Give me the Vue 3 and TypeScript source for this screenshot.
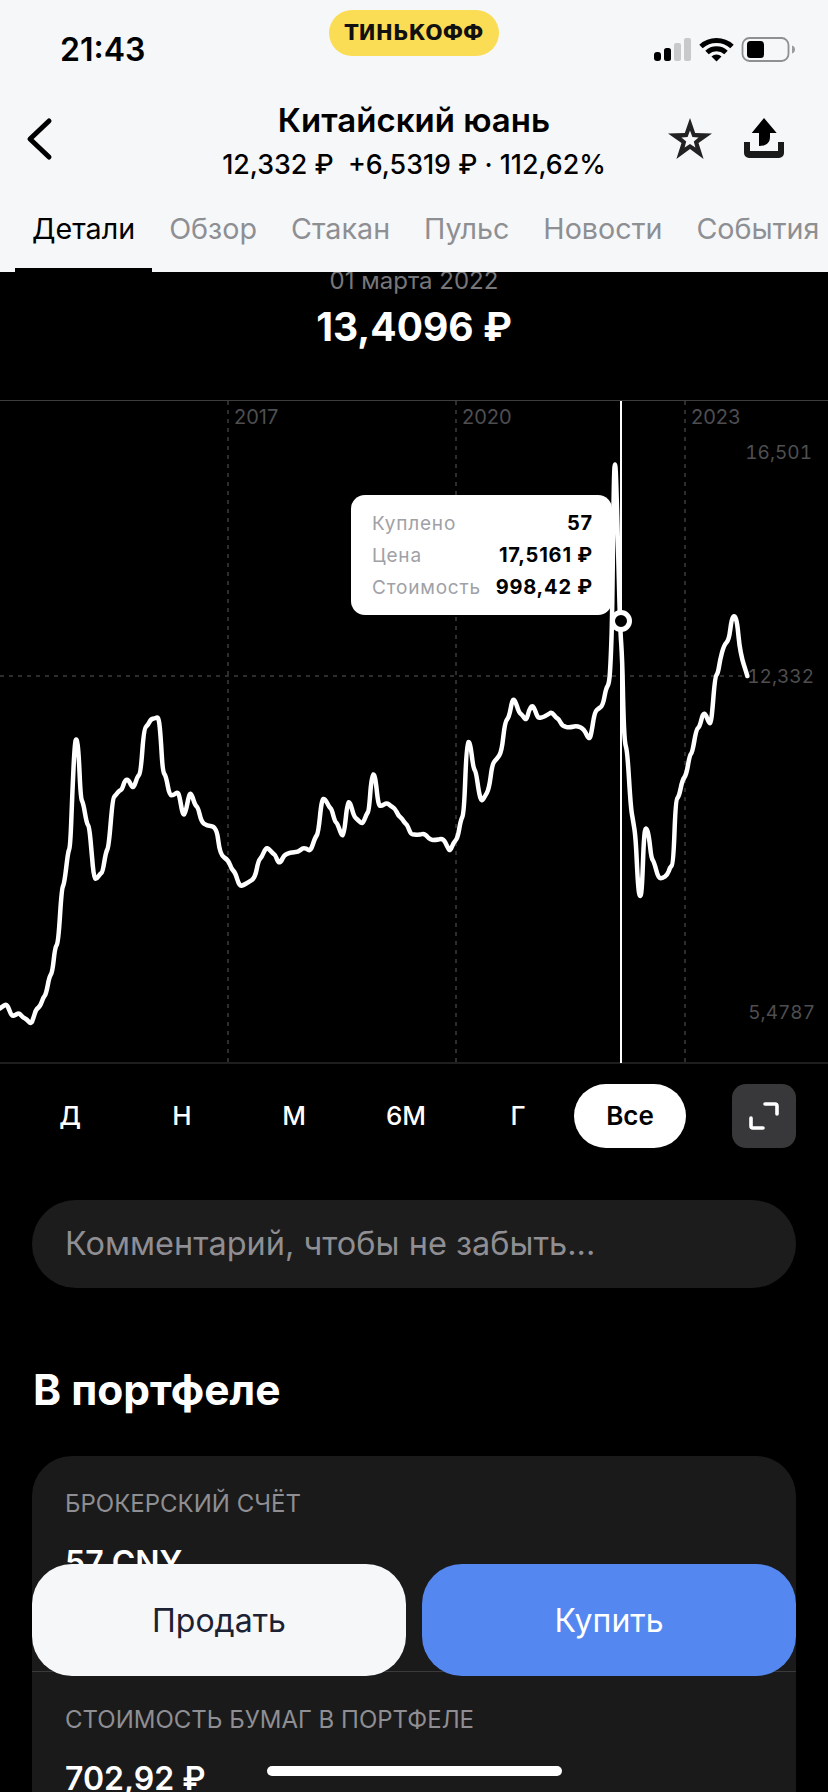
<script setup lang="ts">
import { computed } from 'vue'

type Pt = [number, number]

// points traced from the chart, 3x coords, origin at (0,660) and (414,660)
const leftPart: Pt[] = [[0,1045],[10,1038],[20,1032],[28,1050],[35,1068],[45,1066],[57,1058],[68,1072],[80,1078],[93,1093],[100,1075],[108,1048],[120,1040],[130,1012],[138,1003],[148,950],[157,938],[165,862],[175,848],[185,685],[193,672],[204,575],[211,560],[217,400],[224,250],[230,232],[236,280],[242,415],[250,430],[260,490],[268,500],[275,580],[282,655],[290,657],[300,642],[308,636],[318,575],[326,562],[338,415],[347,405],[358,392],[366,388],[375,360],[385,358],[395,380],[402,382],[412,350],[422,340],[432,205],[444,195],[452,178],[465,175],[476,170],[482,230],[488,335],[498,348],[508,405],[520,406],[532,396],[538,405],[548,465],[556,462],[568,400],[575,402],[585,435],[594,442],[604,485],[620,497],[650,500],[660,585],[685,600],[695,628],[706,638],[718,678],[730,676],[745,667],[765,654],[775,602],[785,592],[797,563],[806,566],[818,580],[826,585],[835,608],[843,606],[852,585],[870,578],[895,576],[908,564],[918,565],[932,574],[945,533],[955,520],[965,418],[975,416],[988,442],[995,448],[1005,485],[1012,490],[1025,527],[1032,525],[1042,428],[1050,425],[1062,470],[1072,478],[1084,490],[1090,488],[1100,462],[1107,452],[1115,345],[1125,342],[1135,437],[1145,438],[1160,428],[1172,438],[1185,445],[1195,467],[1205,474],[1215,490],[1222,495],[1232,522]]
const rightPart: Pt[] = [[0,523],[15,525],[32,520],[48,540],[65,540],[88,535],[100,560],[108,575],[118,548],[131,535],[140,480],[150,462],[158,250],[168,243],[178,325],[186,335],[195,400],[203,425],[212,410],[225,388],[235,310],[248,298],[263,275],[273,185],[285,172],[295,118],[303,120],[315,158],[325,165],[337,183],[345,150],[355,135],[363,150],[372,175],[385,172],[400,165],[413,156],[425,172],[435,178],[445,198],[465,203],[488,197],[510,207],[525,240],[532,222],[542,155],[555,145],[567,135],[576,85],[586,70],[590,0],[594,-100],[597,-350],[600,-560],[603,-595],[606,-560],[612,-350],[618,-100],[625,0],[628,150],[632,250],[640,272],[650,440],[657,480],[665,530],[672,680],[678,715],[684,690],[690,520],[697,500],[705,530],[712,595],[720,605],[733,655],[745,655],[760,645],[768,622],[778,612],[785,420],[795,410],[805,360],[817,345],[827,285],[835,278],[847,208],[857,200],[867,160],[875,162],[885,190],[892,190],[903,50],[912,40],[918,0],[930,-45],[945,-60],[953,-125],[962,-135],[970,-110],[976,-45],[985,0],[993,25],[1000,48]]

const linePath = computed(() => {
  const pts: Pt[] = [
    ...leftPart.map(([x, y]): Pt => [x / 3, 260 + y / 3]),
    ...rightPart.map(([x, y]): Pt => [414 + x / 3, 260 + y / 3])
  ]
  let d = `M${pts[0][0]} ${pts[0][1]}`
  for (let i = 1; i < pts.length - 1; i++) {
    const mx = (pts[i][0] + pts[i + 1][0]) / 2
    const my = (pts[i][1] + pts[i + 1][1]) / 2
    d += ` Q${pts[i][0].toFixed(1)} ${pts[i][1].toFixed(1)} ${mx.toFixed(1)} ${my.toFixed(1)}`
  }
  const last = pts[pts.length - 1]
  return d + ` L${last[0]} ${last[1]}`
})

const tabs = ['Детали', 'Обзор', 'Стакан', 'Пульс', 'Новости', 'События']
const ranges = ['Д', 'Н', 'М', '6М', 'Г', 'Все']
const gridX = [228, 456, 685]
const years = ['2017', '2020', '2023']
const tooltipRows = [
  { label: 'Куплено', value: '57' },
  { label: 'Цена', value: '17,5161 ₽' },
  { label: 'Стоимость', value: '998,42 ₽' }
]
</script>

<template>
  <div class="screen">
    <header class="top">
      <div class="status">
        <span class="time">21:43</span>
        <div class="logo">ТИНЬКОФФ</div>
        <svg class="status-icons" width="142" height="26" viewBox="0 0 142 26">
          <rect x="0" y="15" width="7" height="9" rx="3" fill="#000" />
          <rect x="10" y="11" width="7" height="13" rx="2.5" fill="#000" />
          <rect x="20" y="6" width="7" height="18" rx="2" fill="#c8c9cb" />
          <rect x="30" y="1" width="7" height="23" rx="2" fill="#c8c9cb" />
          <path d="M47 9.5 A23 23 0 0 1 78 9.5" fill="none" stroke="#000" stroke-width="5" />
          <path d="M53 15.5 A14 14 0 0 1 72 15.5" fill="none" stroke="#000" stroke-width="5" />
          <path d="M57.5 19.5 L62.5 24.5 L67.5 19.5 A7.5 7.5 0 0 0 57.5 19.5Z" fill="#000" />
          <rect x="88.5" y="1" width="46" height="23" rx="7" fill="none" stroke="#8f9092" stroke-width="1.8" />
          <rect x="93" y="4" width="17" height="17" rx="3.5" fill="#000" />
          <path d="M138 8.5 C140.5 9.5 141 11 141 12.5 C141 14 140.5 15.5 138 16.5Z" fill="#9a9b9d" />
        </svg>
      </div>

      <div class="nav">
        <svg class="back" width="30" height="44" viewBox="0 0 30 44">
          <path d="M25 4 L6 22 L25 40" fill="none" stroke="#000" stroke-width="5" stroke-linecap="round" stroke-linejoin="round" />
        </svg>
        <div class="heading">
          <div class="title">Китайский юань</div>
          <div class="sub">12,332 ₽&nbsp; +6,5319 ₽ · 112,62%</div>
        </div>
        <div class="actions">
          <svg width="44" height="41" viewBox="0 0 44 41">
            <path d="M22 0 L27.2 15 L44 15.5 L30.5 25 L35.6 41 L22 31 L8.4 41 L13.5 25 L0 15.5 L16.8 15Z" fill="#222" />
            <path d="M22 12.5 L24.4 19 L30.6 19.4 L25.8 23.4 L27.4 29.6 L22 26 L16.6 29.6 L18.2 23.4 L13.4 19.4 L19.6 19Z" fill="#f6f7f9" />
          </svg>
          <svg width="40" height="40" viewBox="0 0 40 40">
            <path d="M20 0 L32.7 15 H26 V19 C26 25 22 28 15 28 V15 H7.7Z" fill="#000" />
            <path d="M0 24 V35 A5 5 0 0 0 5 40 H35 A5 5 0 0 0 40 35 V24 H34 V33 H6 V24Z" fill="#1a1a1a" />
          </svg>
        </div>
      </div>

      <nav class="tabs">
        <div v-for="(tab, i) in tabs" :key="tab" class="tab" :class="{ active: i === 0 }">{{ tab }}</div>
      </nav>
    </header>

    <section class="hero">
      <div class="date">01 марта 2022</div>
      <div class="price">13,4096 ₽</div>
    </section>

    <div class="chart">
      <svg class="plot" width="828" height="664" viewBox="0 0 828 664">
        <line x1="0" y1="0.5" x2="828" y2="0.5" stroke="#3d3d3d" />
        <line x1="0" y1="663" x2="828" y2="663" stroke="#3d3d3d" />
        <line v-for="x in gridX" :key="x" :x1="x" y1="1" :x2="x" y2="663" stroke="#3c3c3c" stroke-width="1.5" stroke-dasharray="4 5" />
        <line x1="0" y1="276" x2="748" y2="276" stroke="#3c3c3c" stroke-width="1.5" stroke-dasharray="4 5" />
        <text v-for="(year, i) in years" :key="year" :x="gridX[i] + 6" y="24" class="axis">{{ year }}</text>
        <text x="812" y="59" text-anchor="end" class="axis value">16,501</text>
        <text x="814" y="283" text-anchor="end" class="axis value">12,332</text>
        <text x="815" y="619" text-anchor="end" class="axis value">5,4787</text>
        <path :d="linePath" fill="none" stroke="#fff" stroke-width="4.5" stroke-linejoin="round" stroke-linecap="round" />
        <line x1="621" y1="1" x2="621" y2="663" stroke="#fff" stroke-width="2" />
      </svg>
      <div class="tooltip">
        <template v-for="row in tooltipRows" :key="row.label">
          <span class="tip-label">{{ row.label }}</span>
          <span class="tip-value">{{ row.value }}</span>
        </template>
      </div>
      <div class="marker"></div>
    </div>

    <div class="ranges">
      <div class="range-list">
        <div v-for="r in ranges" :key="r" class="range" :class="{ selected: r === 'Все' }">{{ r }}</div>
      </div>
      <div class="expand">
        <svg width="30" height="28" viewBox="0 0 30 28">
          <path d="M16 2 H26 A2 2 0 0 1 28 4 V12" fill="none" stroke="#fff" stroke-width="3.6" stroke-linecap="round" />
          <path d="M2 16 V24 A2 2 0 0 0 4 26 H14" fill="none" stroke="#fff" stroke-width="3.6" stroke-linecap="round" />
        </svg>
      </div>
    </div>

    <div class="comment">Комментарий, чтобы не забыть...</div>

    <h2 class="section-title">В портфеле</h2>

    <div class="card">
      <div class="card-row first">
        <div class="card-label">БРОКЕРСКИЙ СЧЁТ</div>
        <div class="card-value">57 CNY</div>
      </div>
      <div class="card-row">
        <div class="card-label">СТОИМОСТЬ БУМАГ В ПОРТФЕЛЕ</div>
        <div class="card-value">702,92 ₽</div>
      </div>
    </div>

    <div class="footer">
      <button class="btn sell">Продать</button>
      <button class="btn buy">Купить</button>
    </div>
    <div class="home"></div>
  </div>
</template>

<style scoped>
.screen {
  position: relative;
  width: 828px;
  height: 1792px;
  overflow: hidden;
  background: #000;
  color: #fff;
  font-family: Inter, "Liberation Sans", sans-serif;
}

.top {
  position: relative;
  z-index: 2;
  height: 272px;
  background: #f6f7f9;
  color: #000;
}

.status {
  height: 100px;
  display: flex;
  justify-content: space-between;
  align-items: flex-start;
  padding: 0 32px 0 60px;
}
.time {
  margin-top: 31px;
  font-size: 32px;
  line-height: 38px;
  font-weight: 600;
}
.logo {
  position: absolute;
  left: 329px;
  top: 10px;
  width: 170px;
  height: 46px;
  border-radius: 23px;
  background: #fadd55;
  color: #111;
  display: flex;
  align-items: center;
  justify-content: center;
  font-family: "DejaVu Sans", sans-serif;
  font-size: 20.5px;
  font-weight: 700;
}
.status-icons {
  margin-top: 37px;
}

.nav {
  height: 86px;
  display: grid;
  grid-template-columns: 1fr auto 1fr;
  padding: 0 44px;
}
.back {
  margin: 17px 0 0 -20px;
}
.heading {
  text-align: center;
}
.title {
  font-size: 33px;
  line-height: 40px;
  font-weight: 600;
}
.sub {
  margin-top: 8px;
  font-size: 26.8px;
  line-height: 32px;
  font-weight: 500;
}
.actions {
  display: flex;
  justify-content: flex-end;
  gap: 32px;
  padding-top: 18px;
  align-items: flex-start;
}

.tabs {
  display: flex;
  padding-left: 15px;
  white-space: nowrap;
  overflow: hidden;
}
.tab {
  height: 86px;
  padding: 26px 17px 0;
  font-size: 28.7px;
  line-height: 34px;
  color: #8e8f93;
  box-sizing: border-box;
}
.tab.active {
  color: #000;
  border-bottom: 4px solid #000;
}

.hero {
  height: 128px;
  overflow: hidden;
  text-align: center;
}
.date {
  margin-top: -6px;
  font-size: 24px;
  line-height: 30px;
  color: #77777b;
}
.price {
  margin-top: 8px;
  font-size: 39px;
  line-height: 46px;
  font-weight: 700;
}

.chart {
  position: relative;
  height: 664px;
}
.plot {
  display: block;
}
.axis {
  font-size: 20px;
  fill: #4e4e50;
}
.axis.value {
  font-size: 19px;
  font-variant-numeric: tabular-nums;
}
.tooltip {
  position: absolute;
  left: 351px;
  top: 95px;
  width: 261px;
  height: 120px;
  box-sizing: border-box;
  padding: 12px 19px 0 21px;
  border-radius: 14px;
  background: #fff;
  display: grid;
  grid-template-columns: 1fr auto;
  grid-auto-rows: 32px;
  align-items: center;
  font-size: 19px;
}
.tip-label {
  color: #a0a1a6;
  letter-spacing: 0.8px;
}
.tip-value {
  color: #000;
  font-weight: 700;
  font-size: 20px;
  letter-spacing: 0.8px;
  text-align: right;
}
.marker {
  position: absolute;
  left: 610px;
  top: 210px;
  width: 12px;
  height: 12px;
  border: 5px solid #fff;
  border-radius: 50%;
  background: #000;
}

.ranges {
  display: flex;
  align-items: center;
  padding: 20px 32px 0 14px;
  justify-content: space-between;
}
.range-list {
  display: flex;
}
.range {
  width: 112px;
  height: 64px;
  line-height: 64px;
  border-radius: 32px;
  text-align: center;
  font-size: 26px;
  font-weight: 500;
}
.range.selected {
  background: #fff;
  color: #000;
  font-weight: 600;
}
.expand {
  width: 64px;
  height: 64px;
  border-radius: 14px;
  background: #38383a;
  display: flex;
  align-items: center;
  justify-content: center;
}

.comment {
  margin: 52px 32px 0;
  height: 88px;
  border-radius: 44px;
  background: #1c1c1c;
  padding-left: 33px;
  line-height: 88px;
  font-size: 32.5px;
  color: #8e8e93;
}

.section-title {
  margin: 78px 0 0 33px;
  font-size: 42.5px;
  line-height: 48px;
  font-weight: 700;
}

.card {
  margin: 42px 32px 0;
  height: 400px;
  border-radius: 40px;
  background: #1a1a1a;
}
.card-row {
  padding: 34px 33px 0;
  height: 216px;
  box-sizing: border-box;
}
.card-row.first {
  border-bottom: 1px solid #3a3a3c;
}
.card-label {
  font-size: 24px;
  line-height: 28px;
  color: #8e8e93;
}
.card-value {
  margin-top: 24px;
  font-size: 32px;
  line-height: 42px;
  font-weight: 600;
}

.footer {
  position: absolute;
  left: 32px;
  right: 32px;
  top: 1564px;
  display: flex;
  gap: 16px;
}
.btn {
  flex: 1;
  height: 112px;
  border: none;
  border-radius: 40px;
  font-family: inherit;
  font-size: 32px;
}
.sell {
  background: #f6f7f9;
  color: #1c2233;
}
.buy {
  background: #5488f0;
  color: #fff;
}
.home {
  position: absolute;
  left: 267px;
  top: 1766px;
  width: 295px;
  height: 10px;
  border-radius: 5px;
  background: #fff;
}
</style>
